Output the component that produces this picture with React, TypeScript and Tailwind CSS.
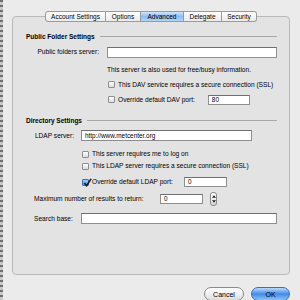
import React from 'react';

const font = { fontFamily: '"Liberation Sans", Arial, sans-serif' };

function Checkbox({ checked = false }: { checked?: boolean }) {
  return (
    <span
      className={`relative inline-flex h-[7px] w-[7px] shrink-0 items-center justify-center rounded-[1px] border ${
        checked
          ? 'border-[#3a6fb5] bg-gradient-to-b from-[#a9cdf4] to-[#4f8fdc]'
          : 'border-[#8e8e8e] bg-gradient-to-b from-white to-[#dcdcdc]'
      }`}
    >
      {checked && (
        <svg viewBox="0 0 10 10" className="absolute -top-[2px] left-0 h-[9px] w-[9px]">
          <path d="M1.5 5.5 L4 8.5 L9 1" fill="none" stroke="#1a1a1a" strokeWidth="1.8" />
        </svg>
      )}
    </span>
  );
}

function CheckRow({ label, checked }: { label: string; checked?: boolean }) {
  return (
    <div className="flex items-center gap-[3px]">
      <Checkbox checked={checked} />
      <span>{label}</span>
    </div>
  );
}

function Field({ value = '', className = '' }: { value?: string; className?: string }) {
  return (
    <div
      className={`flex items-center border border-[#8f8f8f] border-t-[#6f6f6f] bg-white px-[3px] text-[6.4px] text-black ${className}`}
    >
      {value}
    </div>
  );
}

function Heading({ title }: { title: string }) {
  return (
    <div className="flex items-center gap-[5px]">
      <span className="font-bold text-[6.5px]">{title}</span>
      <div className="h-px flex-1 bg-[#a9a9a9]" />
    </div>
  );
}

const tabs = ['Account Settings', 'Options', 'Advanced', 'Delegate', 'Security'];
const tabWidths = ['w-[61px]', 'w-[35px]', 'w-[43px]', 'w-[38px]', 'w-[35px]'];

export default function App() {
  return (
    <div className="relative h-[300px] w-[300px] overflow-hidden bg-[#ebebeb] text-[6.6px] text-black" style={font}>
      {/* strip of the window behind */}
      <div className="absolute left-0 top-0 h-full w-[3px] bg-[repeating-linear-gradient(180deg,#6f6f6f_0px,#6f6f6f_2px,#c9c9c9_2px,#c9c9c9_5px)]" />

      <div className="flex flex-col pl-[12px] pr-[10px] pt-[11px]">
        {/* Tabs */}
        <div className="relative z-10 -mb-[6px] flex pl-[33px]">
          {tabs.map((t, i) => (
            <div
              key={t}
              className={`flex h-[11px] items-center justify-center border-y border-r border-[#9a9a9a] text-[6.5px] ${tabWidths[i]} ${
                i === 0 ? 'rounded-l-[3px] border-l' : ''
              } ${i === tabs.length - 1 ? 'rounded-r-[3px]' : ''} ${
                t === 'Advanced'
                  ? 'border-[#6b92cc] bg-gradient-to-b from-[#d3e6fb] via-[#8dbcf0] to-[#b3d4f7]'
                  : 'bg-gradient-to-b from-white to-[#ebebeb]'
              }`}
            >
              {t}
            </div>
          ))}
        </div>

        {/* Panel */}
        <div className="flex h-[259px] flex-col rounded-[4px] border border-[#b9b9b9] bg-[#e3e3e3] pl-[13px] pr-[12px] pt-[15px]">
          <Heading title="Public Folder Settings" />

          <div className="mt-[5px] flex items-center gap-[8px]">
            <span className="w-[73px] whitespace-nowrap text-right">Public folders server:</span>
            <Field className="h-[11px] flex-1" />
          </div>

          <div className="ml-[81px] mt-[7px] whitespace-nowrap">This server is also used for free/busy information.</div>

          <div className="ml-[82px] mt-[5px] whitespace-nowrap">
            <CheckRow label="This DAV service requires a secure connection (SSL)" />
          </div>

          <div className="ml-[82px] mt-[5px] flex items-center whitespace-nowrap">
            <CheckRow label="Override default DAV port:" />
            <Field value="80" className="ml-[13px] h-[10px] w-[42px]" />
          </div>

          <div className="mt-[11px]">
            <Heading title="Directory Settings" />
          </div>

          <div className="mt-[5px] flex items-center gap-[7px]">
            <span className="w-[48px] whitespace-nowrap text-right">LDAP server:</span>
            <Field value="http://www.metcenter.org" className="h-[11px] w-[171px]" />
          </div>

          <div className="ml-[56px] mt-[8px] whitespace-nowrap">
            <CheckRow label="This server requires me to log on" />
          </div>
          <div className="ml-[56px] mt-[2px] whitespace-nowrap">
            <CheckRow label="This LDAP server requires a secure connection (SSL)" />
          </div>
          <div className="ml-[56px] mt-[6px] flex items-center whitespace-nowrap">
            <CheckRow label="Override default LDAP port:" checked />
            <Field value="0" className="ml-[11px] h-[10px] w-[43px]" />
          </div>

          <div className="ml-[8px] mt-[5px] flex items-center whitespace-nowrap">
            <span className="w-[126px]">Maximum number of results to return:</span>
            <Field value="0" className="h-[10px] w-[43px]" />
            <div className="ml-[7px] flex h-[14px] w-[7px] flex-col items-center justify-between rounded-[3px] border border-[#8a8a8a] bg-gradient-to-b from-white to-[#d8d8d8] py-[2px]">
              <svg viewBox="0 0 6 4" className="h-[3px] w-[4px]">
                <path d="M0 4 L3 0 L6 4 Z" fill="#222" />
              </svg>
              <svg viewBox="0 0 6 4" className="h-[3px] w-[4px]">
                <path d="M0 0 L3 4 L6 0 Z" fill="#222" />
              </svg>
            </div>
          </div>

          <div className="ml-[8px] mt-[7px] flex items-center">
            <span className="w-[39px] whitespace-nowrap">Search base:</span>
            <Field className="ml-[8px] h-[11px] flex-1" />
          </div>
        </div>

        {/* Buttons */}
        <div className="mt-[12px] flex justify-end gap-[7px]">
          <div className="flex h-[14px] w-[40px] items-start justify-center rounded-full border border-[#8c8c8c] bg-gradient-to-b from-white via-[#f0f0f0] to-[#dcdcdc] pt-[2px] text-[7px]">
            Cancel
          </div>
          <div className="flex h-[14px] w-[39px] items-start justify-center rounded-full border border-[#3f6fb5] bg-gradient-to-b from-[#bcd9fa] via-[#3f8ce6] to-[#8cc2f7] pt-[2px] text-[7px]">
            OK
          </div>
        </div>
      </div>
    </div>
  );
}
